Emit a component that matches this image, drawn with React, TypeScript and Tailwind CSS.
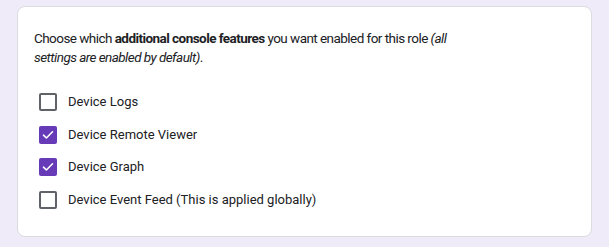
import React from "react";

const features = [
  { label: "Device Logs", checked: false },
  { label: "Device Remote Viewer", checked: true },
  { label: "Device Graph", checked: true },
  { label: "Device Event Feed (This is applied globally)", checked: false },
];

const Checkbox = ({ checked }: { checked: boolean }) =>
  checked ? (
    <span className="flex h-[18px] w-[18px] items-center justify-center rounded-[2px] bg-[#673ab7]">
      <svg width="12" height="10" viewBox="0 0 12 10" fill="none">
        <path d="M1.5 5.2 4.4 8 10.5 1.8" stroke="white" strokeWidth="1.6" strokeLinecap="round" strokeLinejoin="round" />
      </svg>
    </span>
  ) : (
    <span className="h-[18px] w-[18px] rounded-[2px] border-2 border-[#5f6368]" />
  );

export default function App() {
  return (
    <div className="h-[247px] w-[609px] bg-[#f0ebf8] px-[17px] pt-[6px] font-['Roboto',sans-serif]">
      <div className="h-[231px] w-[575px] rounded-[8px] border border-[#dadce0] bg-white px-[16px] pt-[22px]">
        <p className="max-w-[425px] text-[13.5px] leading-[19px] tracking-[-0.55px] text-[#202124]">
          Choose which <b className="font-bold">additional console features</b> you want enabled for this role{" "}
          <i>(all settings are enabled by default)</i>.
        </p>
        <div className="mt-[26px] flex flex-col gap-[14.5px] pl-[5px]">
          {features.map((f) => (
            <label key={f.label} className="flex h-[18px] items-center gap-[11px] text-[13px] text-[#202124]">
              <Checkbox checked={f.checked} />
              <span>{f.label}</span>
            </label>
          ))}
        </div>
      </div>
    </div>
  );
}
